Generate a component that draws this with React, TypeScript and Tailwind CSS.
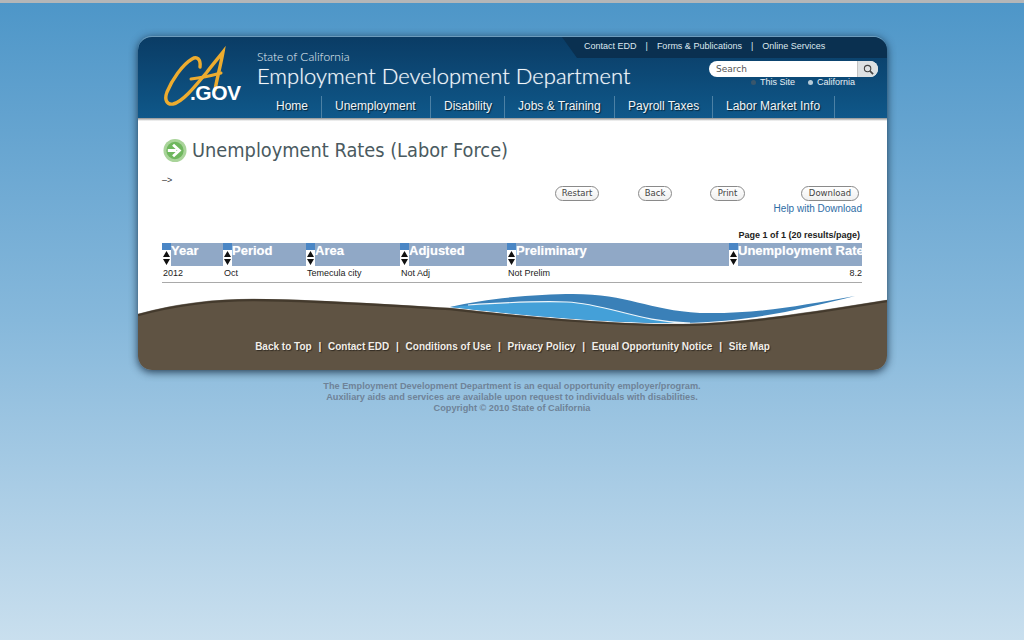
import React from "react"

const NAV = ["Home", "Unemployment", "Disability", "Jobs & Training", "Payroll Taxes", "Labor Market Info"]
const NAV_WIDTHS = ["w-[46px]", "w-[109px]", "w-[74px]", "w-[110px]", "w-[98px]", "w-[122px]"]
const FOOT = ["Back to Top", "Contact EDD", "Conditions of Use", "Privacy Policy", "Equal Opportunity Notice", "Site Map"]
const COLS = [
  { name: "Year", w: "w-[61px]", value: "2012" },
  { name: "Period", w: "w-[83px]", value: "Oct" },
  { name: "Area", w: "w-[94px]", value: "Temecula city" },
  { name: "Adjusted", w: "w-[107px]", value: "Not Adj" },
  { name: "Preliminary", w: "w-[222px]", value: "Not Prelim" },
  { name: "Unemployment Rate", w: "w-[133px]", value: "8.2" },
]
const BUTTONS = [
  { label: "Restart", cls: "w-[44px]" },
  { label: "Back", cls: "w-[34px] ml-[39px]" },
  { label: "Print", cls: "w-[35px] ml-[38px]" },
  { label: "Download", cls: "w-[58px] ml-[56px]" },
]

function SortIcon() {
  return (
    <span className="flex h-[23px] w-[9px] shrink-0 flex-col">
      <span className="h-[7px] bg-[#4a86c5]" />
      <svg viewBox="0 0 9 16" className="h-[16px] w-[9px] bg-white">
        <path d="M4.500 1 8 7H1z M1 9h7l-3.500 6z" fill="#111" />
      </svg>
    </span>
  )
}

function Logo() {
  return (
    <div className="absolute left-[17px] top-[5px] h-[70px] w-[95px]">
      <svg viewBox="0 0 95 70" className="h-[70px] w-[95px]" fill="none" stroke="#edac2f" strokeLinecap="round">
        <path
          d="M45 25C46 17 42 14 37 17C27 23 17 38 12 50C9 58 12 63 18 62C28 60 42 42 52 30C58 22 64 15 68 10C66 22 62 36 60 48"
          strokeWidth="3.400"
        />
        <path d="M36 37C45 36 55 34 66 31" strokeWidth="3" />
      </svg>
      <span className="absolute left-[35px] top-[39px] font-['Liberation_Sans',sans-serif] text-[21px] font-bold leading-[24px] tracking-[-0.5px] text-white">
        .GOV
      </span>
    </div>
  )
}

export default function App() {
  return (
    <div className="flex h-[640px] flex-col overflow-hidden bg-gradient-to-b from-[#4d96c8] via-[#86b8db] to-[#c9dfee] font-['Liberation_Sans',sans-serif]">
      <div className="h-[3px] shrink-0 bg-[#b4b6b8]" />

      {/* Card */}
      <div className="ml-[138px] mt-[33px] w-[749px] rounded-[14px] shadow-[0_2px_8px_rgba(15,35,55,0.85)]">
        {/* Header */}
        <div className="relative h-[82px] overflow-hidden rounded-t-[14px] border-t border-[#6d9cbc] bg-gradient-to-b from-[#0a3c65] to-[#0f588a]">
          <svg viewBox="0 0 325 21" className="absolute right-0 top-0 h-[21px] w-[325px]">
            <path d="M0 0H325V21H15Z" fill="#0a3050" />
          </svg>
          <Logo />

          <div className="relative flex h-[59px]">
            <div className="ml-[119px] pt-[13px] text-white">
              <div className="font-['Lato',sans-serif] text-[12px] font-light leading-[13px] text-[#e6f0f6]">State of California</div>
              <div className="font-['Lato',sans-serif] text-[22px] font-light leading-[25px] text-[#f2f7fa] [text-shadow:0_0_1px_rgba(255,255,255,0.6)]">
                Employment Development Department
              </div>
            </div>
            <div className="absolute left-[446px] top-[3px] flex gap-[9px] text-[9px] leading-[12px] text-[#dde8ef]">
              <span>Contact EDD</span>
              <span>|</span>
              <span>Forms &amp; Publications</span>
              <span>|</span>
              <span>Online Services</span>
            </div>
            <div className="absolute left-[571px] top-[24px] w-[169px]">
              <div className="flex h-[16px] items-center rounded-full bg-white pl-[7px] font-['DejaVu_Sans',sans-serif] text-[9px] text-[#555]">
                <span className="flex-1 pt-[1px]">Search</span>
                <span className="flex h-[16px] w-[21px] items-center justify-center rounded-r-full border-l border-[#c4c4c4] bg-[#dde1e3]">
                  <svg viewBox="0 0 12 12" className="h-[11px] w-[11px]" fill="none" stroke="#444" strokeWidth="1.200">
                    <circle cx="5" cy="5" r="3.500" />
                    <path d="M7.500 7.500 11 11" strokeWidth="1.800" />
                  </svg>
                </span>
              </div>
              <div className="flex pl-[42px] text-[9px] leading-[10px] text-[#e8f0f5]">
                <span className="flex items-center gap-[4px]">
                  <span className="h-[5px] w-[5px] rounded-full bg-[#38566c]" />
                  This Site
                </span>
                <span className="ml-[13px] flex items-center gap-[4px]">
                  <span className="h-[5px] w-[5px] rounded-full bg-[#b6cbd9]" />
                  California
                </span>
              </div>
            </div>
          </div>

          {/* Nav */}
          <nav className="relative ml-[138px] flex h-[22px] text-[12px] text-[#f0f4f7] [text-shadow:1px_1px_1px_rgba(0,0,0,0.6)]">
            {NAV.map((item, i) => (
              <div key={item} className={`${NAV_WIDTHS[i]} whitespace-nowrap border-r border-[#4c81a5] ${i === 0 ? "" : "pl-[13px]"} leading-[21px]`}>
                {item}
              </div>
            ))}
          </nav>
        </div>

        {/* Body */}
        <div className="bg-white">
          <div className="h-[3px] bg-gradient-to-b from-[#8c8f90] to-white" />
          <div className="px-[24px] pt-[17px]">
            <div className="flex h-[25px] items-center gap-[5px] pl-[1px]">
              <svg viewBox="0 0 25 25" className="h-[25px] w-[24px] shrink-0">
                <circle cx="12.500" cy="12.500" r="12" fill="#a9d49a" />
                <circle cx="12.500" cy="12.500" r="9" fill="#6fb75e" />
                <path d="M5 12.500h9M10.500 6.500l6.500 6-6.500 6" fill="none" stroke="#fff" strokeWidth="3" />
              </svg>
              <h1 className="whitespace-nowrap font-['DejaVu_Sans_Condensed','DejaVu_Sans',sans-serif] text-[19.800px] font-normal leading-[25px] text-[#4a5a60] [font-stretch:condensed]">
                Unemployment Rates (Labor Force)
              </h1>
            </div>

            <div className="mt-[11px] h-[12px] text-[9px] leading-[12px] text-[#333]">–&gt;</div>

            <div className="flex pl-[393px]">
              {BUTTONS.map((b) => (
                <button
                  key={b.label}
                  className={`${b.cls} h-[15px] rounded-full border border-[#8a8a8a] bg-gradient-to-b from-white to-[#f0f0f0] font-['DejaVu_Sans',sans-serif] text-[8.500px] leading-[13px] text-[#444]`}
                >
                  {b.label}
                </button>
              ))}
            </div>

            <div className="pr-[1px] pt-[1px] text-right text-[10px] leading-[13px] text-[#2d6ca5]">Help with Download</div>
            <div className="pr-[3px] pt-[14px] text-right text-[9px] font-bold leading-[13px] text-[#222]">Page 1 of 1 (20 results/page)</div>

            <table className="mt-[1px] w-[700px] table-fixed border-collapse">
              <thead>
                <tr className="bg-[#90a8c6]">
                  {COLS.map((c) => (
                    <th key={c.name} className={`${c.w} h-[23px] p-0 align-top`}>
                      <div className="flex">
                        <SortIcon />
                        <span className="whitespace-nowrap text-[13px] font-bold leading-[15px] text-white [text-shadow:0_0_1px_rgba(255,255,255,0.5)]">{c.name}</span>
                      </div>
                    </th>
                  ))}
                </tr>
              </thead>
              <tbody>
                <tr className="border-b border-[#a9a9a9]">
                  {COLS.map((c, i) => (
                    <td
                      key={c.name}
                      className={`h-[16px] py-0 pl-[1px] pr-0 text-[9px] leading-[13px] text-[#222] ${i === 5 ? "text-right" : "text-left"}`}
                    >
                      {c.value}
                    </td>
                  ))}
                </tr>
              </tbody>
            </table>
          </div>

          {/* Wave */}
          <svg viewBox="0 0 749 40" className="mt-[7px] block h-[40px] w-[749px]">
            <path d="M0 24C40 13 80 9 115 9C170 9 260 15 312 18C380 26 480 35 545 34C610 33 680 21 749 10V40H0Z" fill="#5f5343" />
            <path d="M0 25C40 14 80 10 115 10C170 10 260 16 312 19C380 27 480 36 545 35C610 34 680 22 749 11" fill="none" stroke="#2e261b" strokeWidth="2.500" opacity="0.55" />
            <path d="M312 17C350 8 400 4 435 4C490 4 510 20 562 23C620 24 660 16 717 6C660 20 610 32 545 33C480 34 380 25 312 17Z" fill="#3a80b8" />
            <path d="M312 17C350 13 400 11 429 12C470 14 500 32 552 33C480 34 380 25 312 17Z" fill="#44a0d8" />
            <path d="M330 15C360 13 400 11 429 12C470 14 500 32 552 33" fill="none" stroke="#eef6fb" strokeWidth="1.200" />
          </svg>
        </div>

        {/* Footer */}
        <div className="flex h-[40px] justify-center rounded-b-[14px] bg-[#5f5343] pt-[10px] text-[10px] font-bold leading-[14px] text-[#f1eee8] [text-shadow:1px_1px_1px_rgba(0,0,0,0.5)]">
          {FOOT.map((f, i) => (
            <span key={f} className="whitespace-nowrap">
              {i > 0 && <span className="px-[6.800px]">|</span>}
              {f}
            </span>
          ))}
        </div>
      </div>

      {/* Legal */}
      <div className="mt-[11px] text-center text-[9.200px] font-bold leading-[11px] text-[#6f8398]">
        <p>The Employment Development Department is an equal opportunity employer/program.</p>
        <p>Auxiliary aids and services are available upon request to individuals with disabilities.</p>
        <p>Copyright © 2010 State of California</p>
      </div>
    </div>
  )
}
